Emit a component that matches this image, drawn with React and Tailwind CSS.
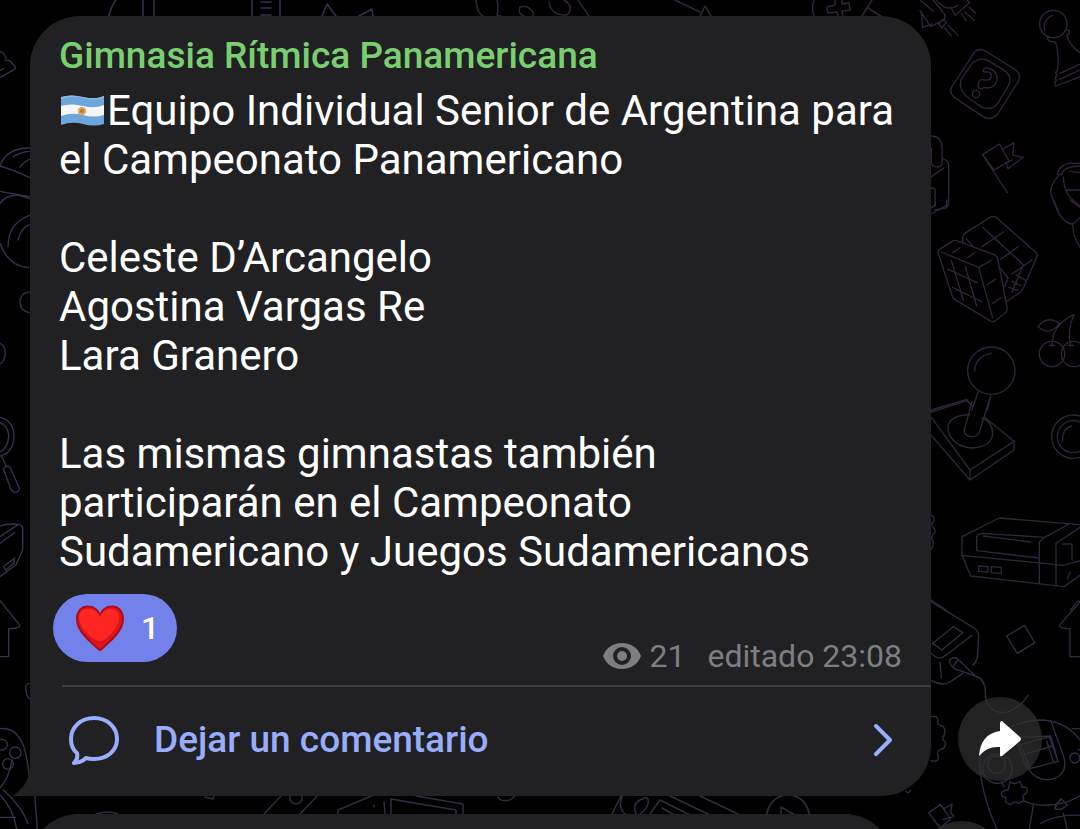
const message = {
  author: "Gimnasia Rítmica Panamericana",
  lines: [
    "Equipo Individual Senior de Argentina para",
    "el Campeonato Panamericano",
    "",
    "Celeste D’Arcangelo",
    "Agostina Vargas Re",
    "Lara Granero",
    "",
    "Las mismas gimnastas también",
    "participarán en el Campeonato",
    "Sudamericano y Juegos Sudamericanos",
  ],
  likes: 1,
  views: 21,
  edited: "editado 23:08",
};

// line doodles behind the chat, each group has its own 3x grid
function Wallpaper() {
  return (
    <svg
      className="absolute inset-0 h-full w-full"
      viewBox="0 0 1080 829"
      preserveAspectRatio="xMidYMid slice"
      fill="none"
      strokeWidth="4"
      strokeLinecap="round"
      strokeLinejoin="round"
      aria-hidden="true"
    >
      {/* rocket, question block, pawn, flag, padlock, pot */}
      <g stroke="#32243a" transform="translate(920 0) scale(.33333)">
        <path d="M40 0l32 40q8 14-4 22L32 80 0 32M4 36l4 46 28-10M0 0l40 34M50 2q30 36 64 14M92 22l14 24 42-38-6-8M56 72l12-14 12 8-14 18zM124 40l14 22M134 36l30 26M148 22l18 18M74 84l20 24M84 76l30 30" />
        <path d="M165 154q18-12 36 2l84 52q20 14 10 36l-62 98q-20 22-44 8l-86-58q-18-14-6-34z" />
        <path d="M158 188q24-18 46-6l50 30q24 18 12 44l-34 56q-18 20-46 10l-48-34q-24-22-14-50z" />
        <path d="M190 212q2-10 12-8 28 6 30 30-2 28-30 30l-12-2-4 6-12-6 2-16q4-10 20-6 16 2 18-14-2-12-16-10-8 0-8-4z" />
        <circle cx="168" cy="282" r="11" />
        <circle cx="400" cy="72" r="41" />
        <path d="M374 92q-8-34 24-46M384 110q-4 12 8 14l14 2q6 14 8 38 2 26-2 48M440 90q10 0 8 10l-8 8q12 32 40 50M412 212q-10 6 0 14-12 8-2 14-10 10-2 18l72-28M420 220l60-28M418 238l62-28" />
        <path d="M188 464l50-32 30 52-46 26zM188 464l74 114M248 448l34-20-4 38 32 6-46 34-6-18 18-8" />
        <path d="M34 408q30 0 32 34v50q-4 12-20 8-12-4-12-14v-40M66 476q20 4 20 20v112q0 10-10 16l-32 6M34 530l38-26M34 564q14 0 12 14-4 10 0 14v22l-12 10" />
        <path d="M480 490h-34q-30 6-34 32 10 4 14 0 4-22 54-24M416 526q-34 40-20 66l18 38M430 530q0 58 54 90M436 570h44M450 514l30 4" />
      </g>

      {/* rubik's cube, cherries, joystick ball */}
      <g stroke="#32243a" transform="translate(920 200) scale(.33333)">
        <path d="M34 42l46-26V0M34 22l12-6V0M400 0q20 64 54 72 12-2 26-20M458 72q0 36 22 70M450 0l30 22" />
        <path d="M60 148l36-24q6-4 14-2l112 42q12 6 12 16l28 146q0 8-8 14l-28 22q-8 6-16 0L104 298q-6-4-8-12L54 158q-2-6 6-10z" />
        <path d="M64 156l112 46 42 152M176 202l40-22M98 158l22-14M142 174l22-16M94 182l36 118M136 200l34 118M84 208l88 40M98 262l88 44M202 254l24-16M218 310l24-16" />
        <path d="M128 130v-20q2-8 10-12l72-46q10-6 18 0l118 104q8 6 4 16l-40 92q-2 6-8 12l-42 28M138 116l24 26M188 82l122 112M276 222l60-42M186 140l64-44M242 178l52-38M310 194l-34 82M288 224l30 18M276 244l28 14M266 262l28 8M242 206l22 28-10 26" />
        <circle cx="396" cy="462" r="38" />
        <circle cx="462" cy="462" r="38" />
        <path d="M396 438q0-64 66-94-22 46-10 94M388 436h16M444 436h16M354 380q28-36 64-10-26 40-64 10z" />
        <circle cx="214" cy="512" r="71" />
        <path d="M164 514q2-46 50-54M174 576l-18 54M212 588l-10 42M34 630l106-32 16 20" />
      </g>

      {/* joystick base, ring, console */}
      <g stroke="#30263a" transform="translate(920 400) scale(.33333)">
        <path d="M34 36L140 2l16 14M156 6l-24 86q2 18 24 18 20-2 22-14L208 0M34 52l116 158v30L34 106M150 210l132-86v26l-132 90M192 50l90 74" />
        <path d="M150 44q-70 2-66 46 12 50 74 54 58-4 60-44-2-36-32-46" />
        <circle cx="460" cy="110" r="65" />
        <circle cx="460" cy="110" r="48" />
        <path d="M428 124q-4-36 26-46M34 346q12 4 8 18l-8 8 12 22-12 20q12 16 0 34" />
        <path d="M126 410l112-56 242 20M126 410v56l26 62 280 32 48-34M126 466l304 30 50-14M170 452v-42q4-8 14-10l190 12-16 14v124M170 452l188 22M374 412l74-40M190 408l142 18M408 556V430l72-48M428 432h28v48M450 516l-8 22M176 498l28 2v16l-28-2zM214 500l30 2v18l-30-2zM34 600l44 30M480 604h-8l-20 26" />
      </g>

      {/* handheld, pen, square, house, gears, robot */}
      <g stroke="#302c42" transform="translate(900 600) scale(.33333)">
        <path d="M92 4l130 80q12 8 14 22l-4 68q-4 14-14 22M98 130l62-50 28 18-62 52zM94 160q22 24 44 6l78-60M120 186l4 48M94 242q36 20 62 0l32-22" />
        <path d="M226 228l-58-20q-20-12-20-24 4-14 22-10zM160 200l14-22M226 228q34 10 30 60 8 50 56 50 42-8 72-52" />
        <path d="M320 108l54-32 30 52-52 32zM540 6l-62 70q2 10 32 10v84h30" />
        <path d="M94 350q20-6 20 14-2 14 14 14 12 12 4 28-10 10 4 20 2 20-14 22-14 6-6 22 0 18-24 12M18 574q8 10 14-4" />
        <path d="M240 466q60-104 190-106 70 6 110 60M240 466q-6 90 50 220M452 362l40 110q12 54-38 66-50 8-80-48l-22-60M362 434l86-24 26 74-84 22zM372 464l84-26M440 424l20 60M356 412l96-4 22 76" />
        <circle cx="292" cy="506" r="44" />
        <circle cx="290" cy="494" r="26" />
        <circle cx="524" cy="474" r="15" />
        <path d="M304 546l8 14M330 546q14 10 30-2l6 18q16-4 16 10-2 10-14 14l4 16-16 8q-14-10-24 4l-16-8 2-14q-14 0-14-10 2-12 20-12zM374 604q80 30 166-16M484 596q-14 12-20 30 18 8 38-10zM400 616l-12 70M420 672q50-30 120-26M540 386h-24M490 640l12 46M534 448l6 4" />
        <path d="M86 638l36-24 30 44-32 26zM118 612l14 14 24-14-4 26 10 12-32 8" />
      </g>

      {/* left edge: wing, helmet, ring, magnifier */}
      <g stroke="#373150" transform="scale(.33333)">
        <path d="M0 154q20 10 18 28 14-4 18 8 14 10 8 18L0 232M0 212l10-6" />
        <path d="M0 498q18-54 88-54M0 498q40 12 88 34M40 470q20-14 48-16M60 502q8-14 28-24M0 574l88 16M0 610q30-40 88-14M24 740q0-70 64-94M54 720q8-34 34-46M0 730q26 70 86 72" />
        <path d="M88 876q-28 2-28 32 2 26 28 30M0 1030q16 8 16 30-2 24-16 32" />
        <path d="M0 1252q42 10 42 60-4 42-30 52l-12 4M0 1268q26 10 26 42-2 34-26 46M4 1366l14 32M10 1406q10-12 20-4l28 62q0 14-14 12-8 0-12-10z" />
        <path d="M0 1578q14-6 40-6 28 0 28 12v66l-20 44-48 36M0 1610l54-36M0 1630l44-32M10 1700l34-26-2 16-24 20z" />
        <path d="M0 1802l60 74q-2 10-34 10v84H0M88 2050q-14 2-10 22 2 18 10 24" />
        <circle cx="6" cy="2234" r="16" />
        <circle cx="46" cy="2258" r="17" />
        <circle cx="24" cy="2292" r="16" />
        <path d="M0 2186q50-6 72 56 12 40 16 90M36 2280q-10 56-36 84M104 2380l8 107M10 2370q54 48 74 100M0 2385q38 36 50 102M0 2452h46" />
      </g>

      {/* slivers between bubbles */}
      <g stroke="#302c42" strokeWidth="1.5">
        <path d="M205 797l8 2 1-4M264 814l19-20M300 814l19-20M290 795v5q6 8 12 0v-5M338 814v-4l38-16M374 805v2M384 802l1 12M391 814v-15l65 11v4M416 796l47 8v10M498 797q2 5 12 3l5-4M612 814l10-20M622 796q-4 12 3 18M636 814q-4-10 4-14 10-6 8 4-2 6-8 10M650 814l10-14 32 16M662 808l14 8M670 796l38 18M700 796l38 18M781 807v8M781 807l12 7" />
        <circle cx="788" cy="816" r="21" />
        <path d="M96 814q12-4 22 0" />
      </g>

      {/* top strip */}
      <g stroke="#373150" strokeWidth="1.5">
        <path d="M109 16q2-10 7-16M143 0v16M154 0v16M252 0v16M280 0v16M261 2h10M261 8h10M261 15h10M322 16l5-12 9 12M359 16l13-7 1 7" />
        <path stroke="#32243a" d="M476 0q0 12 8 17M497 0q2 8 0 15l6 2M520 7q8-2 13 5 2 6-6 5-10-2-7-10zM549 2q2 14 18 13 8-8-3-15M578 0l11 16M675 0l25 12M700 16l5-10 6 10M814 0q-3 8 0 16M835 0v5l-8 2 1 6 9-1 1 4M842 0v4l7-1 1 7-8 1 1 5M862 16l10-16M868 8l14 9" />
      </g>
    </svg>
  );
}

function ArgentinaFlag() {
  return (
    <svg className="mr-[2px] inline-block h-[34px] w-[46px] align-[-3px]" viewBox="0 0 46 34" role="img" aria-label="Argentina">
      <path d="M2 3q10-3 22 0t21-1v28q-10 3-21 0T2 31z" fill="#6da6da" />
      <path d="M2 12q10-3 22 0t21-1v10q-10 3-21 0T2 22z" fill="#f4f6f8" />
      <path d="M2 3q10-3 22 0t21-1v2q-10 3-21 0T2 5z" fill="#91b9de" />
      <circle cx="23" cy="17" r="4" fill="#e0a34e" />
      <circle cx="23" cy="17" r="2" fill="#b87a35" />
    </svg>
  );
}

function Heart() {
  return (
    <svg className="h-[50px] w-[50px]" viewBox="0 0 50 50" aria-hidden="true">
      <path d="M25 10C20-1 1-1 1 16c0 12 12 22 22 31q2 2 4 0c10-9 22-19 22-31C49-1 30-1 25 10z" fill="#a90d1c" />
      <path d="M25 13C20 1 3 1 3 16c0 11 11 20 22 30 11-10 22-19 22-30C47 1 30 1 25 13z" fill="#e0131d" />
      <path d="M25 14C20 3 5 3 4 14c0 10 9 18 17 23q4 2 8 0c8-6 15-14 15-23C44 4 30 3 25 14z" fill="#ff2622" />
    </svg>
  );
}

function Eye() {
  return (
    <svg className="h-[26px] w-[38px]" viewBox="0 0 38 26" aria-hidden="true">
      <path
        fillRule="evenodd"
        fill="#7d7e83"
        d="M19 0C10 0 3 5 0 13c3 8 10 13 19 13s16-5 19-13C35 5 28 0 19 0zm0 4a9 9 0 1 1 0 18 9 9 0 0 1 0-18z"
      />
      <circle cx="19" cy="13" r="5" fill="#7d7e83" />
    </svg>
  );
}

export default function App() {
  return (
    <main className="relative h-screen overflow-hidden bg-black font-[Roboto,sans-serif] text-white">
      <Wallpaper />

      <div className="relative flex flex-col gap-[18px] pt-4 pl-[30px]">
        <div className="flex items-end gap-[27px] pr-[38px]">
          <article className="relative min-w-0 flex-1 rounded-[50px] rounded-bl-none bg-[#212123] pb-1">
            {/* bubble tail */}
            <svg className="absolute bottom-0 -left-4 h-8 w-4" viewBox="0 0 16 32" aria-hidden="true">
              <path d="M16 0v32H1q-2 0 0-2Q16 20 16 0z" fill="#212123" />
            </svg>

            <div className="px-[29px] pt-4">
              <h1 className="mb-[6px] text-[37px] leading-[48px] font-medium text-[#79cf70]">{message.author}</h1>
              <p className="text-[42px] leading-[49px] whitespace-pre">
                <ArgentinaFlag />
                {message.lines.join("\n")}
              </p>
            </div>

            <div className="mt-[18px] flex items-end justify-between pr-[29px] pl-[23px]">
              <button className="flex h-[68px] w-[124px] items-center gap-4 rounded-full bg-[#7382ea] pl-[22px] text-[32px] font-medium">
                <Heart />
                {message.likes}
              </button>
              <div className="-mb-2 flex h-[28px] items-center text-[32px] leading-[40px] text-[#7d7e83]">
                <Eye />
                <span className="ml-2">{message.views}</span>
                <span className="ml-[22px]">{message.edited}</span>
              </div>
            </div>

            <div className="mt-[23px] ml-8 h-[2px] bg-[#3f3f42]" />

            <button className="flex h-[105px] w-full items-center px-[38px] text-[37px] font-medium text-[#98adfb]">
              <svg className="h-[52px] w-[52px]" viewBox="0 0 52 52" fill="none" stroke="currentColor" strokeWidth="4" strokeLinejoin="round" aria-hidden="true">
                <path d="M26 4C13 4 3 13 3 25c0 6 2 11 6 14 1 4 0 7-3 10 5 0 9-2 12-5 3 1 5 1 8 1 13 0 23-8 23-20S39 4 26 4z" />
              </svg>
              <span className="ml-[34px]">Dejar un comentario</span>
              <svg className="ml-auto h-[34px] w-5" viewBox="0 0 20 34" fill="none" stroke="currentColor" strokeWidth="4" strokeLinecap="round" strokeLinejoin="round" aria-hidden="true">
                <path d="M3 3l14 14L3 31" />
              </svg>
            </button>
          </article>

          <button aria-label="Compartir" className="mb-[15px] flex h-[84px] w-[84px] items-center justify-center rounded-full bg-[#303032]/70">
            <svg className="h-[36px] w-[42px]" viewBox="0 0 42 36" aria-hidden="true">
              <path d="M23 0q-2 0-2 2v8C8 12 1 20 0 35q8-10 21-9v8q0 2 2 1l18-15q2-2 0-4L24 1q0-1-1-1z" fill="#fff" />
            </svg>
          </button>
        </div>

        {/* following message, mostly below the fold */}
        <div className="flex items-start gap-[27px] pr-[76px]">
          <div className="h-24 flex-1 rounded-[50px] bg-[#212123]" />
          <div className="mt-[7px] h-[84px] w-[84px] rounded-full bg-[#303032]/70" />
        </div>
      </div>
    </main>
  );
}
